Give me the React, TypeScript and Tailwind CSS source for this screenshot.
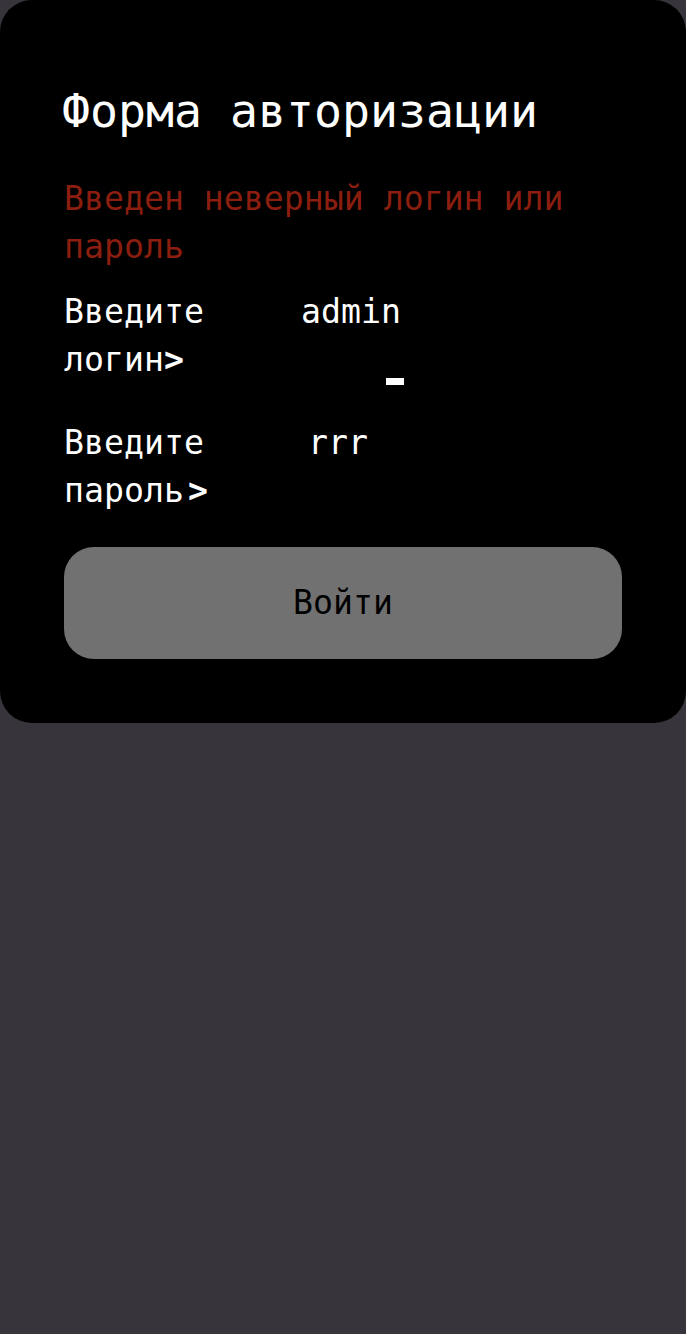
import React from "react";

export default function App() {
  return (
    <div
      className="min-h-screen w-full bg-[#37353b]"
      style={{ fontFamily: '"DejaVu Sans Mono", "Liberation Mono", monospace' }}
    >
      <div className="bg-black rounded-[32px] pt-[84px] pb-[64px] px-[64px]">
        <h1 className="text-white text-[46.5px] leading-[55px] -ml-[2px]">Форма авторизации</h1>
        <p className="mt-[36px] text-[#8b1e0f] text-[33.2px] leading-[48px]">
          Введен неверный логин или пароль
        </p>
        <div className="mt-[17px] flex">
          <div className="w-[237px] text-white text-[33.2px] leading-[48px]">
            Введите
            <br />
            логин<b>&gt;</b>
          </div>
          <div className="flex flex-col">
            <span className="text-white text-[33.2px] leading-[48px]">admin</span>
            <div className="mt-[42px] ml-[85px] w-[18px] h-[7px] bg-white" />
          </div>
        </div>
        <div className="mt-[34px] flex">
          <div className="w-[244px] text-white text-[33.2px] leading-[48px]">
            Введите
            <br />
            пароль<b className="ml-[4px]">&gt;</b>
          </div>
          <div className="text-white text-[33.2px] leading-[48px]">rrr</div>
        </div>
        <button className="mt-[32px] w-full h-[112px] rounded-[30px] bg-[#717171] text-black text-[33.2px] flex items-center justify-center">
          Войти
        </button>
      </div>
    </div>
  );
}
